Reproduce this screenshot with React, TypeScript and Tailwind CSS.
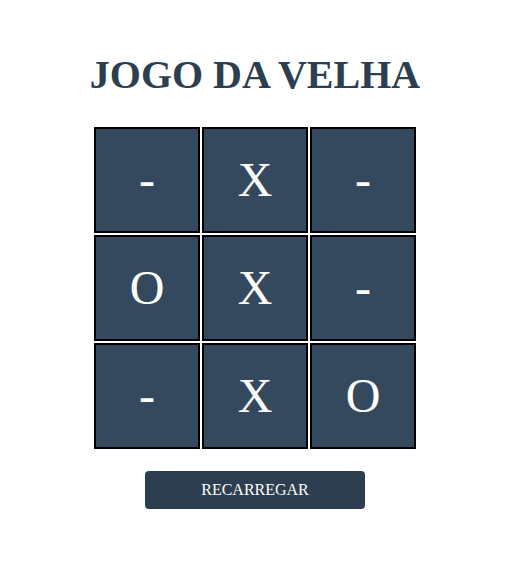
const board = ["-", "X", "-", "O", "X", "-", "-", "X", "O"];

const App = () => {
  return (
    <div className="w-[510px] flex flex-col items-center pt-[55px] font-['Liberation_Serif',serif]">
      <h1 className="text-[40px] leading-[40px] font-bold text-[#2c3e50]">JOGO DA VELHA</h1>
      <div className="grid grid-cols-[repeat(3,106px)] gap-[2px] mt-[32px]">
        {board.map((cell, i) => (
          <div
            key={i}
            className="w-[106px] h-[106px] border-2 border-black bg-[#34495e] flex items-center justify-center text-white text-[48px] leading-none"
          >
            {cell}
          </div>
        ))}
      </div>
      <button className="mt-[22px] w-[220px] h-[38px] rounded-[4px] bg-[#2c3e50] text-white text-[16px] leading-none">
        RECARREGAR
      </button>
    </div>
  );
};

export default App;
